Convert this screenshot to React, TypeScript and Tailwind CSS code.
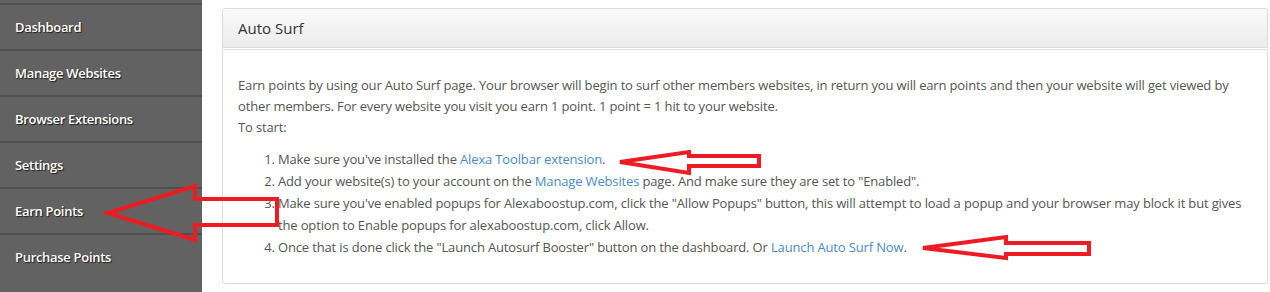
import React from "react";

const menu = [
  "Dashboard",
  "Manage Websites",
  "Browser Extensions",
  "Settings",
  "Earn Points",
  "Purchase Points",
];

const Link = ({ children }: { children: React.ReactNode }) => (
  <a href="#" className="text-[#4a8bcb] no-underline">
    {children}
  </a>
);

export default function App() {
  return (
    <div
      className="relative flex w-[1270px] h-[292px] overflow-hidden bg-white"
      style={{ fontFamily: '"Open Sans", "Liberation Sans", sans-serif' }}
    >
      {/* sidebar */}
      <aside className="w-[202px] shrink-0 h-full bg-[#626262] pt-[3px] flex flex-col">
        {menu.map((m) => (
          <div
            key={m}
            className="h-[46px] shrink-0 border-t-2 border-[#4f4f4f] flex items-center pl-[15px] pt-[2px] text-[13px] font-semibold tracking-[-0.3px] text-white [text-shadow:1px_1px_1px_rgba(0,0,0,0.7)]"
          >
            {m}
          </div>
        ))}
      </aside>

      {/* content */}
      <main className="flex-1 pl-5 pr-[2px] pt-2">
        <section className="h-[276px] flex flex-col">
          <div className="h-[40px] shrink-0 border border-[#dcdcdc] rounded-t-[3px] bg-gradient-to-b from-[#fafafa] to-[#ececec] flex items-center px-[15px] text-[15px] text-[#333]">
            Auto Surf
          </div>
          <div className="flex-1 mt-px border border-[#dcdcdc] rounded-b-[3px] px-[15px] pt-[25px] text-[13px] tracking-[-0.15px] text-[#555]">
            <p className="leading-[21px]">
              Earn points by using our Auto Surf page. Your browser will begin to surf other
              members websites, in return you will earn points and then your website will get
              viewed by other members. For every website you visit you earn 1 point. 1 point = 1
              hit to your website.
              <br />
              To start:
            </p>
            <ol className="list-decimal pl-10 mt-[10px] leading-[22px] marker:text-[#555]">
              <li>
                Make sure you've installed the <Link>Alexa Toolbar extension</Link>.
              </li>
              <li>
                Add your website(s) to your account on the <Link>Manage Websites</Link> page. And
                make sure they are set to "Enabled".
              </li>
              <li>
                Make sure you've enabled popups for Alexaboostup.com, click the "Allow Popups"
                button, this will attempt to load a popup and your browser may block it but gives
                the option to Enable popups for alexaboostup.com, click Allow.
              </li>
              <li>
                Once that is done click the "Launch Autosurf Booster" button on the dashboard. Or{" "}
                <Link>Launch Auto Surf Now</Link>.
              </li>
            </ol>
          </div>
        </section>
      </main>

      {/* hand-drawn red arrows on top */}
      <svg
        className="absolute inset-0 pointer-events-none"
        width="1270"
        height="292"
        viewBox="0 0 1270 292"
      >
        <g fill="none" stroke="#ed1c24" strokeWidth="4" strokeLinejoin="miter">
          <polygon points="108,213 195,186 195,199 277,199 277,225 195,225 195,240" />
          <polygon points="620,162 689,152 689,156 759,156 759,166 689,166 689,173" />
          <polygon points="923,248 1006,237 1006,243 1089,243 1089,254 1006,254 1006,258" />
        </g>
      </svg>
    </div>
  );
}
